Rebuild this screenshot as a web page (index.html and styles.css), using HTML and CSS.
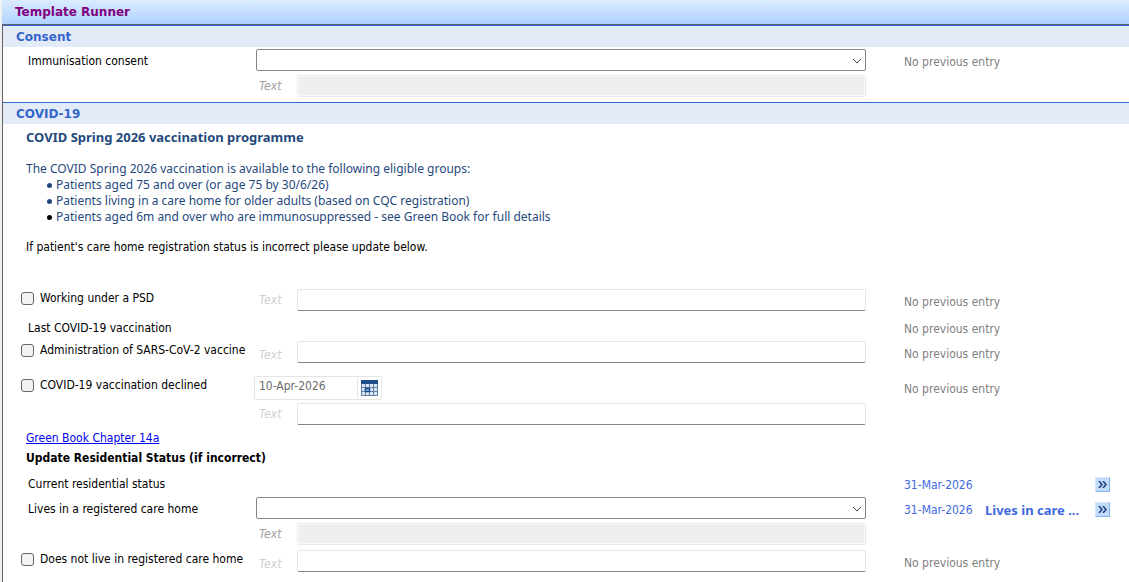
FILE: index.html
```
<!DOCTYPE html>
<html lang="en">
<head>
  <meta charset="UTF-8" />
  <meta name="viewport" content="width=device-width, initial-scale=1" />
  <title>Template Runner</title>
  <link rel="stylesheet" href="styles.css">
</head>
<body>

  <header class="titlebar">
    <h1>Template Runner</h1>
  </header>

  <main class="template">

    <!-- Consent -->
    <section class="section">
      <h2>Consent</h2>
      <div class="row row-select">
        <label class="name" for="consent">Immunisation consent</label>
        <div class="field">
          <div class="select-wrap">
            <select id="consent"><option value=""></option></select>
            <svg class="chevron" viewBox="0 0 10 6"><path d="M1 1l4 4 4-4" /></svg>
          </div>
          <div class="note">
            <label for="consentText">Text</label>
            <input type="text" id="consentText" disabled />
          </div>
        </div>
        <div class="previous">No previous entry</div>
      </div>
    </section>

    <!-- COVID-19 -->
    <section class="section">
      <h2>COVID-19</h2>

      <div class="info">
        <h3>COVID Spring 2026 vaccination programme</h3>
        <p>The COVID Spring 2026 vaccination is available to the following eligible groups:</p>
        <ul>
          <li>Patients aged 75 and over (or age 75 by 30/6/26)</li>
          <li>Patients living in a care home for older adults (based on CQC registration)</li>
          <li class="black-dot">Patients aged 6m and over who are immunosuppressed - see Green Book for full details</li>
        </ul>
        <p class="hint">If patient's care home registration status is incorrect please update below.</p>
      </div>

      <div class="row">
        <label class="check"><input type="checkbox" /> Working under a PSD</label>
        <div class="field">
          <div class="note optional">
            <label for="psdText">Text</label>
            <input type="text" id="psdText" />
          </div>
        </div>
        <div class="previous">No previous entry</div>
      </div>

      <div class="row row-plain">
        <span class="name">Last COVID-19 vaccination</span>
        <div class="field"></div>
        <div class="previous">No previous entry</div>
      </div>

      <div class="row">
        <label class="check"><input type="checkbox" /> Administration of SARS-CoV-2 vaccine</label>
        <div class="field">
          <div class="note optional low">
            <label for="adminText">Text</label>
            <input type="text" id="adminText" />
          </div>
        </div>
        <div class="previous">No previous entry</div>
      </div>

      <div class="row row-declined">
        <label class="check"><input type="checkbox" /> COVID-19 vaccination declined</label>
        <div class="field">
          <div class="date">
            <input type="text" value="10-Apr-2026" aria-label="Date declined" />
            <button type="button" aria-label="Choose date">
              <svg viewBox="0 0 17 16">
                <rect width="17" height="16" fill="#dbe6f3" />
                <rect width="17" height="4" fill="#1d4e89" />
                <path d="M.5 4v12M4.5 4v12M8.5 4v12M12.5 4v12M16.5 4v12M0 7.500h17M0 11.500h17M0 15.500h17" stroke="#5f7fa8" />
                <rect x="4.500" y="8.500" width="4" height="3" fill="#8fc0f0" stroke="#1d4e89" stroke-width="1.500" />
              </svg>
            </button>
          </div>
          <div class="note optional">
            <label for="declinedText">Text</label>
            <input type="text" id="declinedText" />
          </div>
        </div>
        <div class="previous">No previous entry</div>
      </div>

      <div class="links">
        <a href="#">Green Book Chapter 14a</a>
        <h3>Update Residential Status (if incorrect)</h3>
      </div>

      <div class="row row-status">
        <span class="name">Current residential status</span>
        <div class="field"></div>
        <div class="previous recorded">
          <span class="when">31-Mar-2026</span>
          <button type="button" class="more" aria-label="Show history"><svg viewBox="0 0 9 7"><path d="M1 0l3 3.500-3 3.500M5 0l3 3.500-3 3.500" /></svg></button>
        </div>
      </div>

      <div class="row row-select">
        <label class="name" for="careHome">Lives in a registered care home</label>
        <div class="field">
          <div class="select-wrap">
            <select id="careHome"><option value=""></option></select>
            <svg class="chevron" viewBox="0 0 10 6"><path d="M1 1l4 4 4-4" /></svg>
          </div>
          <div class="note">
            <label for="careHomeText">Text</label>
            <input type="text" id="careHomeText" disabled />
          </div>
        </div>
        <div class="previous recorded">
          <span class="when">31-Mar-2026</span>
          <strong>Lives in care ...</strong>
          <button type="button" class="more" aria-label="Show history"><svg viewBox="0 0 9 7"><path d="M1 0l3 3.500-3 3.500M5 0l3 3.500-3 3.500" /></svg></button>
        </div>
      </div>

      <div class="row row-last">
        <label class="check"><input type="checkbox" /> Does not live in registered care home</label>
        <div class="field">
          <div class="note optional low">
            <label for="notCareText">Text</label>
            <input type="text" id="notCareText" />
          </div>
        </div>
        <div class="previous">No previous entry</div>
      </div>
    </section>
  </main>

</body>
</html>
```
FILE: styles.css
```
/* Reset */
* {
  margin: 0;
  padding: 0;
  box-sizing: border-box;
}

body {
  min-height: 100vh;
  display: flex;
  flex-direction: column;
  padding-left: 2px;
  background: #f0f0f0;
  color: #000;
  font: 12px/16px Tahoma, "DejaVu Sans Condensed", sans-serif;
}
input, select, button {
  font: inherit;
}

/* Title bar */
.titlebar {
  height: 24px;
  padding: 0 13px;
  background: linear-gradient(#dcebff, #b0d2ff);
}
.titlebar h1 {
  font: bold 12px/24px Verdana, "DejaVu Sans", sans-serif;
  color: #800080;
}

/* Sections */
.template {
  flex: 1;
  background: #fff;
  border-top: 1px solid #646464;
  border-left: 1px solid #646464;
}
.section {
  border-top: 1px solid #2f67d0;
  padding-bottom: 5px;
}
.section h2 {
  padding: 1px 13px 0;
  background: #e3eaf8;
  font: bold 12px/20px Verdana, "DejaVu Sans", sans-serif;
  color: #3366cc;
}

/* Free text blocks */
.info {
  padding: 5px 23px 0;
  font-family: "Noto Sans", sans-serif;
  color: #1f497d;
}
.info h3 {
  margin-bottom: 16px;
  font-size: 13px;
}
.info ul {
  list-style: none;
  padding-left: 20px;
}
.info li {
  display: flex;
  align-items: center;
  gap: 4px;
}
.info li::before {
  content: "";
  width: 5px;
  height: 5px;
  margin-left: 1px;
  border-radius: 50%;
  background: #1f497d;
}
.info .black-dot::before {
  background: #000;
}
.info .hint {
  margin: 14px 0 34px;
  font-family: Tahoma, "DejaVu Sans Condensed", sans-serif;
  color: #000;
}
.links {
  padding: 5px 23px 0;
}
.links a {
  color: #0000ee;
}
.links h3 {
  margin-top: 4px;
  font-size: 12px;
}

/* Rows */
.row {
  display: grid;
  grid-template-columns: 253px minmax(0, 1fr) 263px;
  align-items: start;
  margin-bottom: 8px;
}
.name {
  padding-left: 25px;
}
.check {
  display: flex;
  align-items: center;
  gap: 6px;
  padding: 1px 0 0 18px;
  white-space: nowrap;
}
.check input {
  appearance: none;
  width: 13px;
  height: 13px;
  border: 1px solid #666;
  border-radius: 3px;
  background: #f3f3f3;
}
.check input:checked {
  background: #3366cc;
}
.row-plain {
  margin-bottom: 4px;
}
.row-plain .name {
  padding-top: 1px;
}
.row-plain .previous {
  padding-top: 2px;
}
.row-select {
  margin: 2px 0 0;
}
.row-select .name {
  padding-top: 4px;
}
.row-declined {
  margin: 13px 0 0;
}
.row-declined .field {
  gap: 3px;
}
.row-status {
  margin: 9px 0 4px;
}
.row-status .name {
  padding-top: 1px;
}
.row-status .previous {
  padding-top: 2px;
}
.row-last {
  margin: 5px 0 0;
}

/* Fields */
.field {
  display: flex;
  flex-direction: column;
  gap: 4px;
}
.select-wrap {
  position: relative;
  display: flex;
}
.select-wrap select {
  appearance: none;
  width: 100%;
  height: 22px;
  padding: 0 24px 0 4px;
  border: 1px solid #858585;
  border-radius: 2px;
  background: #fff;
}
.chevron {
  position: absolute;
  right: 4px;
  top: 9px;
  width: 10px;
  height: 6px;
  fill: none;
  stroke: #444;
  pointer-events: none;
}
.note {
  display: flex;
  align-items: center;
}
.note label {
  width: 41px;
  padding-left: 3px;
  font-style: italic;
  color: #a0a0a0;
}
.note.optional label {
  color: #d0d0d0;
}
.note.low label {
  padding-top: 6px;
}
.note input {
  flex: 1;
  min-width: 0;
  height: 22px;
  padding: 0 4px;
  border: 1px solid #e5e5e5;
  border-bottom-color: #858585;
  border-radius: 2px;
  background: #fff;
}
.note input:disabled {
  border-color: #ebebeb;
  background: #efefef;
  box-shadow: inset 0 0 0 1px #fafafa;
}
.date {
  display: flex;
  width: 128px;
  height: 24px;
  margin-left: -2px;
  border: 1px solid #e5e5e5;
  border-radius: 2px;
}
.date input {
  flex: 1;
  min-width: 0;
  padding: 0 4px 4px;
  border: none;
  background: none;
  color: #6d6d6d;
}
.date button {
  width: 24px;
  margin: 1px 0;
  border: none;
  border-left: 1px solid #e5e5e5;
  background: none;
}
.date svg {
  display: block;
  width: 17px;
  height: 16px;
  margin: 0 auto;
}

/* Previous entries */
.previous {
  padding: 5px 19px 0 38px;
  color: #808080;
}
.recorded {
  display: flex;
  align-items: flex-start;
  color: #4169e1;
}
.recorded .when {
  width: 81px;
}
.recorded strong {
  font-family: "Noto Sans", sans-serif;
  font-size: 13px;
  white-space: nowrap;
}
.more {
  width: 15px;
  height: 15px;
  margin-left: auto;
  border: 1px solid #d5e6fb;
  border-right-color: #7fb2f0;
  border-bottom-color: #7fb2f0;
  background: #c3dcfc;
}
.more svg {
  display: block;
  width: 9px;
  height: 7px;
  margin: 0 auto;
  fill: none;
  stroke: #1f3f7d;
  stroke-width: 1.5;
}
```
